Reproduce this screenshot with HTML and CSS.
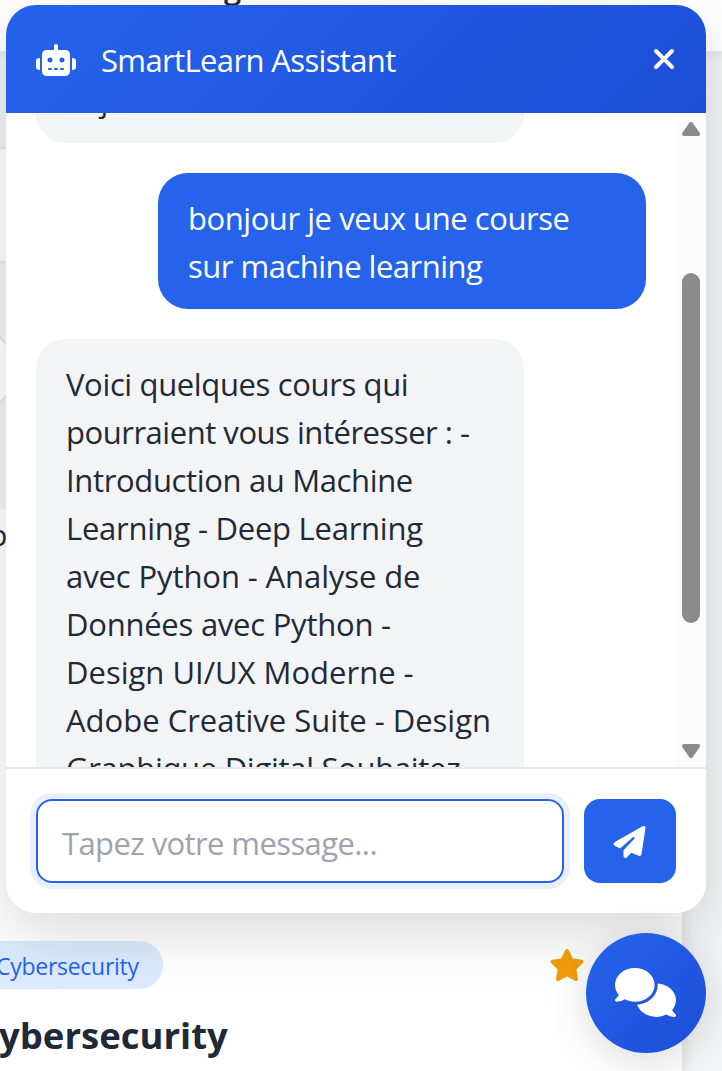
FILE: index.html
```html
<!DOCTYPE html>
<html lang="fr">
<head>
<meta charset="utf-8">
<title>SmartLearn Assistant</title>
<link rel="stylesheet" href="styles.css">
</head>
<body>
<div class="page">
  <header class="navbar"><span>g</span></header>
  <section class="filters">
    <div class="search"></div>
    <div class="circle"></div>
  </section>
  <main class="course">
    <p class="label">p</p>
    <div class="meta">
      <span class="tag">Cybersecurity</span>
      <svg class="star" viewBox="0 0 576 512"><path d="M316.9 18C311.6 7 300.4 0 288.1 0s-23.4 7-28.8 18L195 150.3 51.4 171.5c-12 1.8-22 10.2-25.7 21.7s-.7 24.2 7.9 32.7L137.8 329 113.2 474.7c-2 12 3 24.2 12.9 31.3s23 8 33.8 2.3l128.3-68.5 128.3 68.5c10.8 5.7 23.9 4.9 33.8-2.3s14.9-19.3 12.9-31.3L438.5 329 542.7 225.9c8.6-8.5 11.7-21.2 7.9-32.7s-13.7-19.9-25.7-21.7L381.2 150.3 316.9 18z"/></svg>
    </div>
    <h2 class="title">ybersecurity</h2>
  </main>
</div>

<div class="chat">
  <div class="chat-head">
    <svg class="robot" viewBox="0 0 640 512"><path d="M320 0c17.7 0 32 14.3 32 32V96H472c39.8 0 72 32.2 72 72V440c0 39.8-32.2 72-72 72H168c-39.8 0-72-32.2-72-72V168c0-39.8 32.2-72 72-72H288V32c0-17.7 14.3-32 32-32zM208 384c-8.8 0-16 7.2-16 16s7.2 16 16 16h32c8.8 0 16-7.2 16-16s-7.2-16-16-16H208zm96 0c-8.8 0-16 7.2-16 16s7.2 16 16 16h32c8.8 0 16-7.2 16-16s-7.2-16-16-16H304zm96 0c-8.8 0-16 7.2-16 16s7.2 16 16 16h32c8.8 0 16-7.2 16-16s-7.2-16-16-16H400zM264 256a40 40 0 1 0 -80 0 40 40 0 1 0 80 0zm152 40a40 40 0 1 0 0-80 40 40 0 1 0 0 80zM48 224H64V416H48c-26.5 0-48-21.5-48-48V272c0-26.5 21.5-48 48-48zm544 0c26.5 0 48 21.5 48 48v96c0 26.5-21.5 48-48 48H576V224h16z"/></svg>
    <span class="chat-title">SmartLearn Assistant</span>
    <svg class="close" viewBox="0 0 384 512"><path d="M342.6 150.6c12.5-12.5 12.5-32.8 0-45.3s-32.8-12.5-45.3 0L192 210.7 86.6 105.4c-12.5-12.5-32.8-12.5-45.3 0s-12.5 32.8 0 45.3L146.7 256 41.4 361.4c-12.5 12.5-12.5 32.8 0 45.3s32.8 12.5 45.3 0L192 301.3 297.4 406.6c12.5 12.5 32.8 12.5 45.3 0s12.5-32.8 0-45.3L237.3 256 342.6 150.6z"/></svg>
  </div>
  <div class="chat-body">
    <div class="messages">
      <div class="msg bot first"><span class="line">aujourd'hui</span></div>
      <div class="msg user"><span class="line u1">bonjour je veux une course</span><span class="line u2">sur machine learning</span></div>
      <div class="msg bot">
        <span class="line b1">Voici quelques cours qui</span>
        <span class="line b2">pourraient vous intéresser : -</span>
        <span class="line b3">Introduction au Machine</span>
        <span class="line b4">Learning - Deep Learning</span>
        <span class="line b5">avec Python - Analyse de</span>
        <span class="line b6">Données avec Python -</span>
        <span class="line b7">Design UI/UX Moderne -</span>
        <span class="line b8">Adobe Creative Suite - Design</span>
        <span class="line b9">Graphique Digital Souhaitez</span>
      </div>
    </div>
    <div class="scrollbar">
      <svg class="arrow" viewBox="0 0 18 14"><path d="M9 2L16 12H2Z"/></svg>
      <div class="thumb"></div>
      <svg class="arrow" viewBox="0 0 18 14"><path d="M9 12L16 2H2Z"/></svg>
    </div>
  </div>
  <div class="chat-input">
    <div class="field"><span>Tapez votre message...</span></div>
    <div class="send"><svg viewBox="0 0 512 512"><path d="M498.1 5.6c10.1 7 15.4 19.1 13.5 31.2l-64 416c-1.5 9.7-7.4 18.2-16 23s-18.9 5.4-28 1.6L284 427.7l-68.5 74.1c-8.9 9.7-22.9 12.9-35.2 8.1S160 493.2 160 480V396.4c0-4 1.5-7.8 4.2-10.7L331.8 202.8c5.8-6.3 5.6-16-.4-22s-15.7-6.4-22-.7L106 360.8 17.7 316.6C7.1 311.3 .3 300.7 0 288.9s5.9-22.8 16.1-28.7l448-256c10.7-6.1 23.9-5.5 34 1.4z"/></svg></div>
  </div>
</div>

<div class="fab"><svg viewBox="0 0 640 512"><path d="M208 352c114.9 0 208-78.8 208-176S322.9 0 208 0S0 78.8 0 176c0 38.6 14.7 74.3 39.6 103.4c-3.5 9.4-8.7 17.7-14.2 24.7c-4.8 6.2-9.7 11-13.3 14.3c-1.8 1.6-3.3 2.9-4.3 3.7c-.5 .4-.9 .7-1.1 .8l-.2 .2C1 327.2-1.4 334.4 .8 340.9S9.1 352 16 352c21.8 0 43.8-5.6 62.1-12.5c9.2-3.5 17.8-7.4 25.3-11.4C134.1 343.3 169.8 352 208 352zM448 176c0 112.3-99.1 196.9-216.5 207C255.8 457.4 336.4 512 432 512c38.2 0 73.9-8.7 104.7-23.9c7.5 4 16 7.9 25.2 11.4c18.3 6.9 40.3 12.5 62.1 12.5c6.9 0 13.1-4.5 15.2-11.1c2.1-6.6-.2-13.8-5.8-17.9l-.2-.2c-.2-.2-.6-.4-1.1-.8c-1-.8-2.5-2-4.3-3.7c-3.6-3.3-8.5-8.1-13.3-14.3c-5.5-7-10.7-15.4-14.2-24.7c24.9-29 39.6-64.7 39.6-103.4c0-92.8-84.9-168.9-192.6-175.5c.4 5.1 .6 10.3 .6 15.5z"/></svg></div>
</body>
</html>
```
FILE: styles.css
```css
* { box-sizing: border-box; }
body {
  margin: 0;
  width: 722px;
  height: 1071px;
  overflow: hidden;
  position: relative;
  font-family: "Open Sans", "Noto Sans", sans-serif;
  color: #1f2937;
  background: #f3f4f6;
}
svg { display: block; flex: none; }
.page { display: flex; flex-direction: column; height: 1071px; overflow: hidden; }
.navbar {
  flex: none;
  height: 51px;
  background: #fff;
  box-shadow: 0 4px 12px rgba(0, 0, 0, .1);
  padding-left: 224px;
  font-size: 31px;
  font-weight: 600;
  line-height: 40px;
}
.navbar span { display: block; margin-top: -33px; }
.filters { flex: none; height: 458px; padding-top: 96px; width: 682px; }
.search { height: 116px; background: #fff; border: solid #e5e7eb; border-width: 2px 0; }
.circle {
  width: 86px;
  height: 86px;
  margin: 64px 0 0 -70px;
  border-radius: 50%;
  background: #fff;
  border: 2px solid #e5e7eb;
}
.course {
  flex: none;
  width: 682px;
  height: 562px;
  background: #fff;
  box-shadow: 0 4px 12px rgba(0, 0, 0, .1);
  clip-path: inset(0 -20px 0 0);
}
.label { margin: 0 0 0 -11px; height: 432px; font-size: 30px; line-height: 52px; }
.meta { display: flex; align-items: center; justify-content: space-between; height: 48px; padding-right: 97px; }
.tag {
  height: 48px;
  line-height: 51px;
  margin-left: -28px;
  padding: 0 24px;
  width: 191px;
  border-radius: 24px;
  background: #dbeafe;
  color: #2563eb;
  font-size: 23px;
  letter-spacing: -.28px;
}
.star { width: 36px; height: 32px; fill: #f59e0b; }
.title { margin: 18px 0 0 -1px; font-size: 36.5px; line-height: 56px; font-weight: 700; }

.chat {
  position: absolute;
  left: 6px;
  top: 5px;
  width: 700px;
  height: 908px;
  display: flex;
  flex-direction: column;
  border-radius: 30px;
  overflow: hidden;
  background: #fff;
  box-shadow: 0 20px 60px rgba(0, 0, 0, .15);
}
.chat-head {
  flex: none;
  height: 108px;
  display: flex;
  align-items: center;
  padding: 2px 30px 0;
  color: #fff;
  background: linear-gradient(135deg, #2563eb, #1d4ed8);
}
.robot { width: 40px; height: 32px; fill: #fff; }
.chat-title { flex: 1; margin-left: 25px; font-size: 31px; letter-spacing: -.63px; line-height: 48px; white-space: nowrap; }
.close { width: 24px; height: 32px; fill: #fff; margin-top: -2px; }
.chat-body { flex: none; height: 654px; display: flex; overflow: hidden; }
.messages { width: 670px; padding: 0 30px; display: flex; flex-direction: column; gap: 30px; }
.msg {
  flex: none;
  width: 488px;
  padding: 21px 30px 19px;
  border-radius: 30px;
  background: #f3f4f6;
  font-size: 31px;
  line-height: 48px;
}
.first { margin-top: -58px; }
.first .line { letter-spacing: -.9px; }
.user { align-self: flex-end; background: #2563eb; color: #fff; }
.line { display: block; white-space: nowrap; }
.u1 { letter-spacing: -.45px; }
.u2 { letter-spacing: -.5px; }
.b1 { letter-spacing: -.36px; }
.b2 { letter-spacing: -.47px; }
.b3 { letter-spacing: -.35px; }
.b4 { letter-spacing: -.25px; }
.b5 { letter-spacing: -.1px; }
.b6 { letter-spacing: -.24px; }
.b9 { letter-spacing: -.3px; }
.scrollbar {
  width: 30px;
  background: #fcfcfc;
  display: flex;
  flex-direction: column;
  align-items: center;
  padding: 9px 0;
}
.arrow { width: 18px; height: 14px; fill: #8b8b8b; stroke: #8b8b8b; stroke-width: 4; stroke-linejoin: round; }
.thumb { width: 18px; height: 350px; margin: 137px 0 121px; border-radius: 9px; background: #8b8b8b; }
.chat-input {
  flex: none;
  height: 146px;
  border-top: 2px solid #e5e7eb;
  padding: 30px;
  display: flex;
  gap: 20px;
}
.field {
  width: 528px;
  height: 84px;
  border: 2px solid #2563eb;
  border-radius: 16px;
  padding-left: 24px;
  box-shadow: 0 0 0 6px rgba(37, 99, 235, .1);
  color: #9ca3af;
  font-size: 31px;
  letter-spacing: -.6px;
  line-height: 84px;
}
.send {
  width: 92px;
  height: 84px;
  border-radius: 16px;
  background: #2563eb;
  display: flex;
  align-items: center;
  justify-content: center;
  padding: 2px 1px 0 0;
}
.send svg { width: 33px; height: 32px; fill: #fff; }
.fab {
  position: absolute;
  left: 586px;
  top: 933px;
  width: 120px;
  height: 120px;
  border-radius: 50%;
  background: linear-gradient(135deg, #2563eb, #1d4ed8);
  box-shadow: 0 8px 40px rgba(0, 0, 0, .15);
  display: flex;
  align-items: center;
  justify-content: center;
}
.fab svg { width: 61px; height: 49px; fill: #fff; margin: -1px 0 0 -1px; }
```
